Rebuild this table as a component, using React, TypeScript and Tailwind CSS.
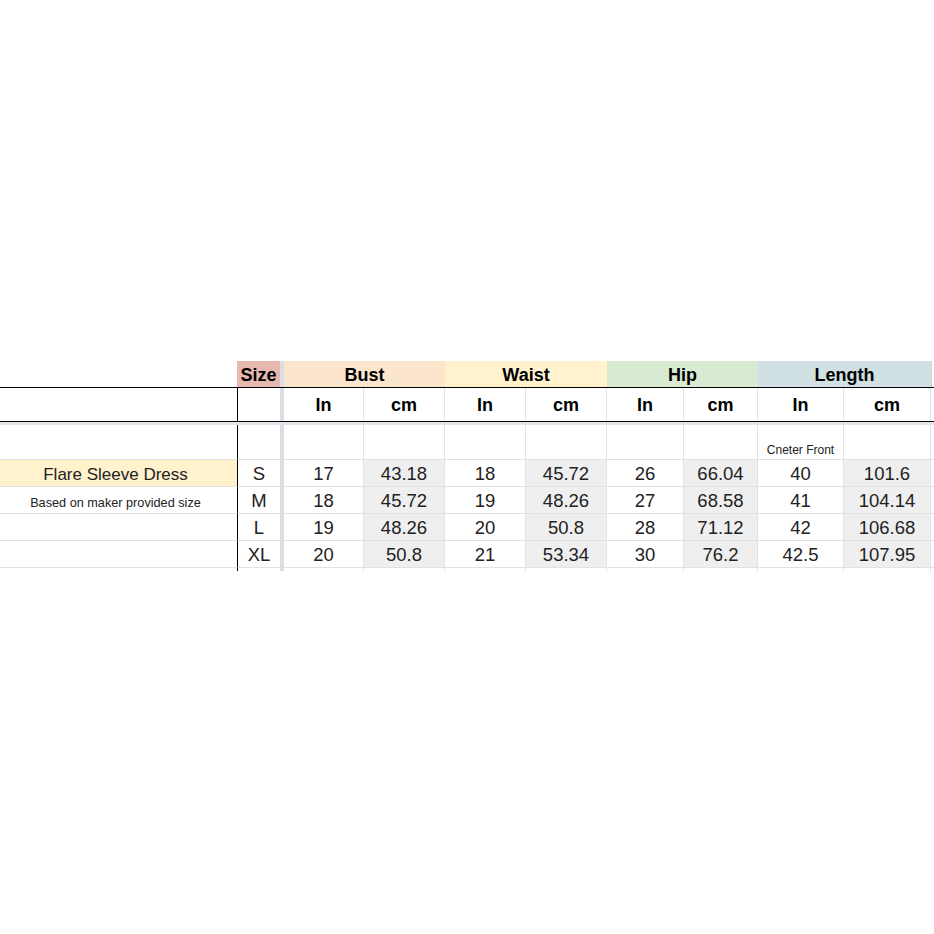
const cols = {
  a: 'w-[237px]',
  size: 'w-[43px]',
  div: 'w-[4px]',
};

const sub = ['w-[80px]', 'w-[81px]', 'w-[81px]', 'w-[81px]', 'w-[77px]', 'w-[74px]', 'w-[86px]', 'w-[87px]'];

const rows = [
  { label: 'Flare Sleeve Dress', size: 'S', vals: ['17', '43.18', '18', '45.72', '26', '66.04', '40', '101.6'] },
  { label: 'Based on maker provided size', size: 'M', vals: ['18', '45.72', '19', '48.26', '27', '68.58', '41', '104.14'] },
  { label: '', size: 'L', vals: ['19', '48.26', '20', '50.8', '28', '71.12', '42', '106.68'] },
  { label: '', size: 'XL', vals: ['20', '50.8', '21', '53.34', '30', '76.2', '42.5', '107.95'] },
];

const Divider = () => <div className={`${cols.div} shrink-0 self-stretch bg-[#dcdee6]`} />;

export default function App() {
  return (
    <div
      className="w-[934px] h-[934px] bg-white pt-[361px] text-[#222]"
      style={{ fontFamily: '"Liberation Sans", Arial, sans-serif' }}
    >
      {/* group headers */}
      <div className="flex h-[26px] text-[18px] font-bold text-black">
        <div className={`${cols.a} shrink-0`} />
        <div className={`${cols.size} shrink-0 bg-[#e6b8af] flex items-center justify-center pt-[2px]`}>Size</div>
        <Divider />
        <div className="w-[161px] shrink-0 bg-[#fce5cd] flex items-center justify-center pt-[2px]">Bust</div>
        <div className="w-[162px] shrink-0 bg-[#fff2cc] flex items-center justify-center pt-[2px]">Waist</div>
        <div className="w-[151px] shrink-0 bg-[#d9ead3] flex items-center justify-center pt-[2px]">Hip</div>
        <div className="w-[173px] shrink-0 bg-[#d0e0e3] flex items-center justify-center pt-[2px]">Length</div>
        <div className="w-[3px] shrink-0 border-l border-[#d4d4d4]" />
      </div>
      <div className="h-px bg-black" />

      {/* In / cm */}
      <div className="flex h-[33px] text-[18px] font-bold text-black">
        <div className={`${cols.a} shrink-0`} />
        <div className={`${cols.size} shrink-0 border-l border-black`} />
        <Divider />
        {sub.map((w, i) => (
          <div key={i} className={`${w} shrink-0 border-r border-[#e2e2e2] flex items-center justify-center pt-[2px]`}>
            {i % 2 === 0 ? 'In' : 'cm'}
          </div>
        ))}
        <div className="w-[3px] shrink-0" />
      </div>
      <div className="h-px bg-black" />
      <div className="h-[3px] bg-[#e3e5ea]" />

      {/* note row */}
      <div className="flex h-[35px]">
        <div className={`${cols.a} shrink-0 border-b border-[#e2e2e2]`} />
        <div className={`${cols.size} shrink-0 border-l border-b border-l-black border-b-[#e2e2e2]`} />
        <Divider />
        {sub.map((w, i) => (
          <div
            key={i}
            className={`${w} shrink-0 border-r border-b border-[#e2e2e2] flex items-end justify-center text-[12px] text-[#222]`}
          >
            {i === 6 ? 'Cneter Front' : ''}
          </div>
        ))}
        <div className="w-[3px] shrink-0 border-b border-[#e2e2e2]" />
      </div>

      {rows.map((r, ri) => (
        <div key={ri} className="flex h-[27px] text-[18.5px]">
          <div
            className={`${cols.a} shrink-0 border-b border-[#e2e2e2] flex justify-center pr-[6px] ${
              ri === 0 ? 'bg-[#fff2cc] text-[17px] items-center pt-[3px]' : 'text-[12.7px] items-end'
            }`}
          >
            {r.label}
          </div>
          <div
            className={`${cols.size} shrink-0 border-l border-b border-l-black border-b-[#e2e2e2] flex items-center justify-center pt-[2px]`}
          >
            {r.size}
          </div>
          <Divider />
          {r.vals.map((v, i) => (
            <div
              key={i}
              className={`${sub[i]} shrink-0 border-r border-b border-[#e2e2e2] flex items-center justify-center pt-[2px] ${
                i % 2 === 1 ? 'bg-[#efefef]' : ''
              }`}
            >
              {v}
            </div>
          ))}
          <div className="w-[3px] shrink-0 border-b border-[#e2e2e2]" />
        </div>
      ))}

      {/* cut-off row */}
      <div className="flex h-[3px]">
        <div className={`${cols.a} shrink-0`} />
        <div className={`${cols.size} shrink-0 border-l border-black`} />
        <Divider />
        {sub.map((w, i) => (
          <div key={i} className={`${w} shrink-0 border-r border-[#e2e2e2]`} />
        ))}
      </div>
    </div>
  );
}
